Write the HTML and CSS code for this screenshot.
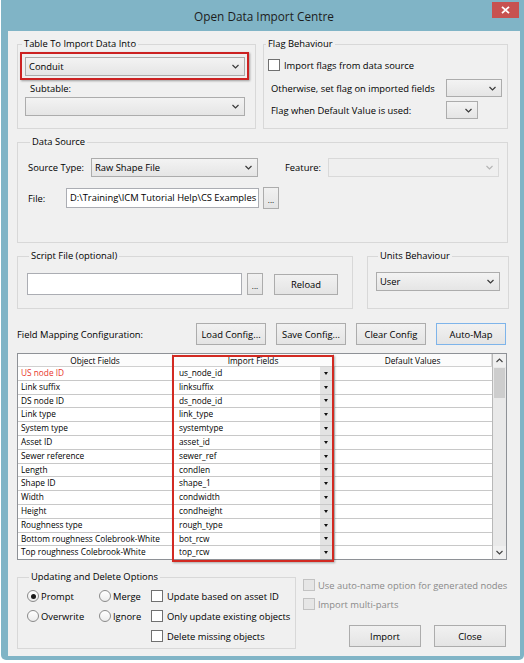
FILE: index.html
```html
<!DOCTYPE html>
<html>
<head>
<meta charset="utf-8">
<title>Open Data Import Centre</title>
<link rel="stylesheet" href="styles.css">
</head>
<body>
<div class="window">
  <div class="titlebar">
    <div class="title">Open Data Import Centre</div>
    <div class="close"><svg width="9" height="8" viewBox="0 0 9 8"><path d="M1 0.8 L8 7.2 M8 0.8 L1 7.2" stroke="#fff" stroke-width="1.8"/></svg></div>
  </div>
  <div class="client">
    <div class="row1">
      <fieldset class="grp grp-table">
        <legend>Table To Import Data Into</legend>
        <div class="highlight">
          <div class="combo w220"><span class="val">Conduit</span><svg class="chev" viewBox="0 0 7 5"><path d="M0.5 1 L3.5 4 L6.5 1" fill="none" stroke="#3a3a3a" stroke-width="1.2"/></svg></div>
        </div>
        <div class="sublabel">Subtable:</div>
        <div class="combo w220 subcombo"><span class="val"></span><svg class="chev" viewBox="0 0 7 5"><path d="M0.5 1 L3.5 4 L6.5 1" fill="none" stroke="#3a3a3a" stroke-width="1.2"/></svg></div>
      </fieldset>
      <fieldset class="grp grp-flag">
        <legend>Flag Behaviour</legend>
        <div class="check flag-import"><span class="box"></span><span>Import flags from data source</span></div>
        <div class="flag-rows">
          <span>Otherwise, set flag on imported fields</span>
          <div class="combo small w56"><span class="val"></span><svg class="chev" viewBox="0 0 7 5"><path d="M0.5 1 L3.5 4 L6.5 1" fill="none" stroke="#3a3a3a" stroke-width="1.2"/></svg></div>
          <span>Flag when Default Value is used:</span>
          <div class="combo small w32"><span class="val"></span><svg class="chev" viewBox="0 0 7 5"><path d="M0.5 1 L3.5 4 L6.5 1" fill="none" stroke="#3a3a3a" stroke-width="1.2"/></svg></div>
        </div>
      </fieldset>
    </div>

    <fieldset class="grp grp-source">
      <legend>Data Source</legend>
      <div class="src-row">
        <span class="lbl-type">Source Type:</span>
        <div class="combo w167"><span class="val">Raw Shape File</span><svg class="chev" viewBox="0 0 7 5"><path d="M0.5 1 L3.5 4 L6.5 1" fill="none" stroke="#3a3a3a" stroke-width="1.2"/></svg></div>
        <span class="lbl-feature">Feature:</span>
        <div class="combo disabled w171"><span class="val"></span><svg class="chev" viewBox="0 0 7 5"><path d="M0.5 1 L3.5 4 L6.5 1" fill="none" stroke="#b5b5b5" stroke-width="1.2"/></svg></div>
      </div>
      <div class="file-row">
        <span class="lbl-file">File:</span>
        <div class="textbox w193">D:\Training\ICM Tutorial Help\CS Examples</div>
        <div class="btn dots">...</div>
      </div>
    </fieldset>

    <div class="row3">
      <fieldset class="grp grp-script">
        <legend>Script File (optional)</legend>
        <div class="script-row">
          <div class="textbox w215 tall"></div>
          <div class="btn dots">...</div>
          <div class="btn reload">Reload</div>
        </div>
      </fieldset>
      <fieldset class="grp grp-units">
        <legend>Units Behaviour</legend>
        <div class="combo w124 units-combo"><span class="val">User</span><svg class="chev" viewBox="0 0 7 5"><path d="M0.5 1 L3.5 4 L6.5 1" fill="none" stroke="#3a3a3a" stroke-width="1.2"/></svg></div>
      </fieldset>
    </div>

    <div class="fmc-bar">
      <span class="fmc-label">Field Mapping Configuration:</span>
      <div class="btn cfg">Load Config...</div>
      <div class="btn cfg">Save Config...</div>
      <div class="btn cfg">Clear Config</div>
      <div class="btn cfg default">Auto-Map</div>
    </div>

    <div class="grid">
      <div class="gtable">
        <div class="ghead">
          <div>Object Fields</div>
          <div>Import Fields</div>
          <div>Default Values</div>
        </div>
        <div class="grow"><div class="c-obj req">US node ID</div><div class="c-imp"><span>us_node_id</span><i class="dd"></i></div><div class="c-def"></div></div>
        <div class="grow"><div class="c-obj">Link suffix</div><div class="c-imp"><span>linksuffix</span><i class="dd"></i></div><div class="c-def"></div></div>
        <div class="grow"><div class="c-obj">DS node ID</div><div class="c-imp"><span>ds_node_id</span><i class="dd"></i></div><div class="c-def"></div></div>
        <div class="grow"><div class="c-obj">Link type</div><div class="c-imp"><span>link_type</span><i class="dd"></i></div><div class="c-def"></div></div>
        <div class="grow"><div class="c-obj">System type</div><div class="c-imp"><span>systemtype</span><i class="dd"></i></div><div class="c-def"></div></div>
        <div class="grow"><div class="c-obj">Asset ID</div><div class="c-imp"><span>asset_id</span><i class="dd"></i></div><div class="c-def"></div></div>
        <div class="grow"><div class="c-obj">Sewer reference</div><div class="c-imp"><span>sewer_ref</span><i class="dd"></i></div><div class="c-def"></div></div>
        <div class="grow"><div class="c-obj">Length</div><div class="c-imp"><span>condlen</span><i class="dd"></i></div><div class="c-def"></div></div>
        <div class="grow"><div class="c-obj">Shape ID</div><div class="c-imp"><span>shape_1</span><i class="dd"></i></div><div class="c-def"></div></div>
        <div class="grow"><div class="c-obj">Width</div><div class="c-imp"><span>condwidth</span><i class="dd"></i></div><div class="c-def"></div></div>
        <div class="grow"><div class="c-obj">Height</div><div class="c-imp"><span>condheight</span><i class="dd"></i></div><div class="c-def"></div></div>
        <div class="grow"><div class="c-obj">Roughness type</div><div class="c-imp"><span>rough_type</span><i class="dd"></i></div><div class="c-def"></div></div>
        <div class="grow"><div class="c-obj">Bottom roughness Colebrook-White</div><div class="c-imp"><span>bot_rcw</span><i class="dd"></i></div><div class="c-def"></div></div>
        <div class="grow"><div class="c-obj">Top roughness Colebrook-White</div><div class="c-imp"><span>top_rcw</span><i class="dd"></i></div><div class="c-def"></div></div>
      </div>
      <div class="vscroll">
        <div class="sbtn"><svg class="schev" viewBox="0 0 7 5"><path d="M0.5 4 L3.5 1 L6.5 4" fill="none" stroke="#444" stroke-width="1.2"/></svg></div>
        <div class="thumb"></div>
        <div class="strack"></div>
        <div class="sbtn"><svg class="schev" viewBox="0 0 7 5"><path d="M0.5 1 L3.5 4 L6.5 1" fill="none" stroke="#444" stroke-width="1.2"/></svg></div>
      </div>
      <div class="col-highlight"></div>
    </div>

    <div class="bottom">
      <fieldset class="grp grp-update">
        <legend>Updating and Delete Options</legend>
        <div class="opt-grid">
          <div class="radio-item"><span class="radio on"></span><span>Prompt</span></div>
          <div class="radio-item"><span class="radio"></span><span>Merge</span></div>
          <div class="check"><span class="box"></span><span>Update based on asset ID</span></div>
          <div class="radio-item"><span class="radio"></span><span>Overwrite</span></div>
          <div class="radio-item"><span class="radio"></span><span>Ignore</span></div>
          <div class="check"><span class="box"></span><span>Only update existing objects</span></div>
          <div></div>
          <div></div>
          <div class="check"><span class="box"></span><span>Delete missing objects</span></div>
        </div>
      </fieldset>
      <div class="bottom-right">
        <div class="check disabled"><span class="box"></span><span>Use auto-name option for generated nodes</span></div>
        <div class="check disabled multi"><span class="box"></span><span>Import multi-parts</span></div>
        <div class="actions">
          <div class="btn act">Import</div>
          <div class="btn act">Close</div>
        </div>
      </div>
    </div>
  </div>
</div>
</body>
</html>
```

FILE: styles.css
```css
* { box-sizing: border-box; }
html, body { margin: 0; padding: 0; background: #fff; overflow: hidden; }
body {
  font-family: "Open Sans", "Noto Sans", sans-serif;
  font-size: 9.4px;
  color: #000;
}

.window {
  margin-left: 1px;
  width: 523px;
  height: 660px;
  background: #80b4c6;
  border-radius: 0 0 5px 5px;
  padding: 0 4px 4px 7px;
  display: flex;
  flex-direction: column;
}

.titlebar {
  height: 31px;
  display: grid;
  grid-template-columns: 1fr auto 1fr;
  align-items: center;
}
.title { grid-column: 2; font-size: 11.8px; color: #1d1d1d; }
.close {
  grid-column: 3;
  justify-self: end;
  align-self: start;
  margin-top: 2px;
  margin-right: 1px;
  width: 27px;
  height: 16px;
  background: #c75250;
  display: flex;
  align-items: center;
  justify-content: center;
}

.client {
  flex: 1;
  background: #f0f0f0;
  padding: 6px 12px 0 9px;
}

/* group boxes */
.grp {
  margin: 0;
  padding: 0;
  border: 1px solid #d8d8d8;
  min-width: 0;
  flex: none;
}
.grp legend {
  padding: 0 2px;
  margin-left: 2px;
  line-height: 14px;
}

/* combos */
.combo {
  display: flex;
  align-items: center;
  height: 19px;
  border: 1px solid #acacac;
  background: linear-gradient(#f3f3f3, #e5e5e5);
  padding: 0 5px 0 3px;
}
.combo.small { height: 18px; }
.combo .val { flex: 1; white-space: nowrap; overflow: hidden; }
.combo.disabled { border-color: #d9d9d9; background: #efefef; }
.chev { width: 7px; height: 5px; flex: none; }
.w220 { width: 220px; }
.w56 { width: 56px; }
.w32 { width: 32px; }
.w167 { width: 167px; }
.w171 { width: 171px; }
.w124 { width: 124px; }
.w193 { width: 193px; }
.w215 { width: 215px; }

.textbox {
  height: 20px;
  border: 1px solid #abadb3;
  background: #fff;
  padding: 2px 3px 0;
  white-space: nowrap;
  overflow: hidden;
}
.textbox.tall { height: 22px; }

.btn {
  display: flex;
  align-items: center;
  justify-content: center;
  border: 1px solid #acacac;
  background: linear-gradient(#f1f1f1, #e4e4e4);
  white-space: nowrap;
}
.btn.dots { width: 16px; height: 22px; font-size: 8px; padding-top: 2px; flex: none; }

/* row 1 */
.row1 { display: flex; gap: 7px; }
.grp-table, .grp-flag { height: 92px; }
.grp-table { width: 239px; padding-left: 2px; }
.grp-flag { width: 245px; }

.highlight {
  display: inline-block;
  margin-top: 1px;
  border: 2px solid #cc2222;
  padding: 3px 2px 2px 3px;
  box-shadow: 1px 1px 2px rgba(0, 0, 0, 0.35);
}
.sublabel { margin: 2px 0 0 10px; line-height: 14px; }
.subcombo { margin: 1px 0 0 5px; }

.check { display: flex; align-items: center; height: 14px; gap: 4px; white-space: nowrap; }
.box { width: 12px; height: 12px; border: 1px solid #707070; background: #fff; flex: none; }
.check.disabled { color: #8a8a8a; }
.check.disabled .box { border-color: #c2c2c2; background: #e6e6e6; }

.flag-import { margin: 7px 0 0 4px; }
.flag-rows {
  display: grid;
  grid-template-columns: 175px auto;
  row-gap: 4px;
  align-items: center;
  margin: 7px 0 0 7px;
}

/* data source */
.grp-source { height: 108px; margin-top: 6px; padding-left: 10px; }
.src-row { display: flex; align-items: center; margin-top: 9px; }
.lbl-type { width: 63px; }
.lbl-feature { width: 43px; margin-left: 27px; }
.file-row { display: flex; align-items: center; margin-top: 10px; height: 22px; }
.lbl-file { width: 38px; }
.file-row .btn.dots { margin-left: 4px; }

/* script / units */
.row3 { display: flex; gap: 14px; margin-top: 6px; }
.grp-script { width: 336px; height: 60px; padding-left: 9px; }
.grp-units { width: 142px; height: 60px; padding-left: 8px; }
.script-row { display: flex; align-items: center; margin-top: 10px; }
.script-row .btn.dots { margin-left: 5px; }
.btn.reload { width: 64px; height: 21px; margin-left: 11px; }
.units-combo { margin-top: 9px; }

/* field mapping bar */
.fmc-bar { display: flex; align-items: center; gap: 10px; margin-top: 14px; padding-right: 2px; }
.fmc-label { flex: 1; }
.btn.cfg { width: 70px; height: 22px; }
.btn.default { border-color: #7eb4ea; }

/* grid */
.grid {
  position: relative;
  display: flex;
  width: 490px;
  height: 207px;
  margin-top: 8px;
  border: 1px solid #8e9196;
  background: #f0f0f0;
  font-size: 8.3px;
}
.gtable { width: 474px; overflow: hidden; }
.ghead, .grow { display: grid; grid-template-columns: 155px 161px 158px; }
.ghead { height: 13px; background: #fcfcfc; border-bottom: 1px solid #d0d0d0; }
.ghead div {
  text-align: center;
  line-height: 13px;
  border-right: 1px solid #dadada;
}
.grow { height: 13.8px; background: #fff; }
.grow > div { border-bottom: 1px solid #c8c8c8; line-height: 12.5px; white-space: nowrap; overflow: hidden; }
.c-obj { padding-left: 3px; border-right: 1px solid #d6d6d6; }
.c-obj.req { color: #e8352c; }
.c-imp { display: flex; padding-left: 6px; }
.c-imp span { flex: 1; }
.dd {
  width: 12px;
  margin-right: 2px;
  background: #e3e3e3;
  display: flex;
  align-items: center;
  justify-content: center;
}
.dd::after {
  content: "";
  border-left: 2.5px solid transparent;
  border-right: 2.5px solid transparent;
  border-top: 3px solid #111;
}
.c-def { border-left: 1px solid #d6d6d6; }

.vscroll {
  width: 14px;
  display: flex;
  flex-direction: column;
  background: #e9e9e9;
  border-left: 1px solid #b8b8b8;
}
.sbtn { height: 13px; display: flex; align-items: center; justify-content: center; background: #f0f0f0; }
.schev { width: 7px; height: 5px; }
.thumb { height: 30px; margin: 1px 1px 0 1px; background: #cdcdcd; }
.strack { flex: 1; }

.col-highlight {
  position: absolute;
  left: 154px;
  top: 1px;
  width: 162px;
  height: 207px;
  border: 2px solid #d22a22;
  box-shadow: 1px 1px 2px rgba(0, 0, 0, 0.3);
  pointer-events: none;
}

/* bottom */
.bottom { display: flex; margin-top: 10px; }
.grp-update { width: 279px; height: 79px; padding-left: 9px; }
.opt-grid {
  display: grid;
  grid-template-columns: 72px 52px auto;
  grid-auto-rows: 14px;
  row-gap: 6px;
  margin-top: 5px;
}
.radio-item { display: flex; align-items: center; gap: 2px; white-space: nowrap; }
.radio {
  width: 12px;
  height: 12px;
  border-radius: 50%;
  border: 1px solid #8a8a8a;
  background: linear-gradient(#fff, #ececec);
  display: flex;
  align-items: center;
  justify-content: center;
  flex: none;
}
.radio.on::after {
  content: "";
  width: 5px;
  height: 5px;
  border-radius: 50%;
  background: #1a1a1a;
}

.bottom-right { flex: 1; min-width: 0; padding-left: 7px; padding-top: 8px; }
.check.disabled { gap: 3px; }
.check.multi { margin-top: 5px; }
.actions { display: flex; justify-content: flex-end; gap: 13px; margin-top: 14px; padding-right: 2px; }
.btn.act { width: 72px; height: 22px; }
```
